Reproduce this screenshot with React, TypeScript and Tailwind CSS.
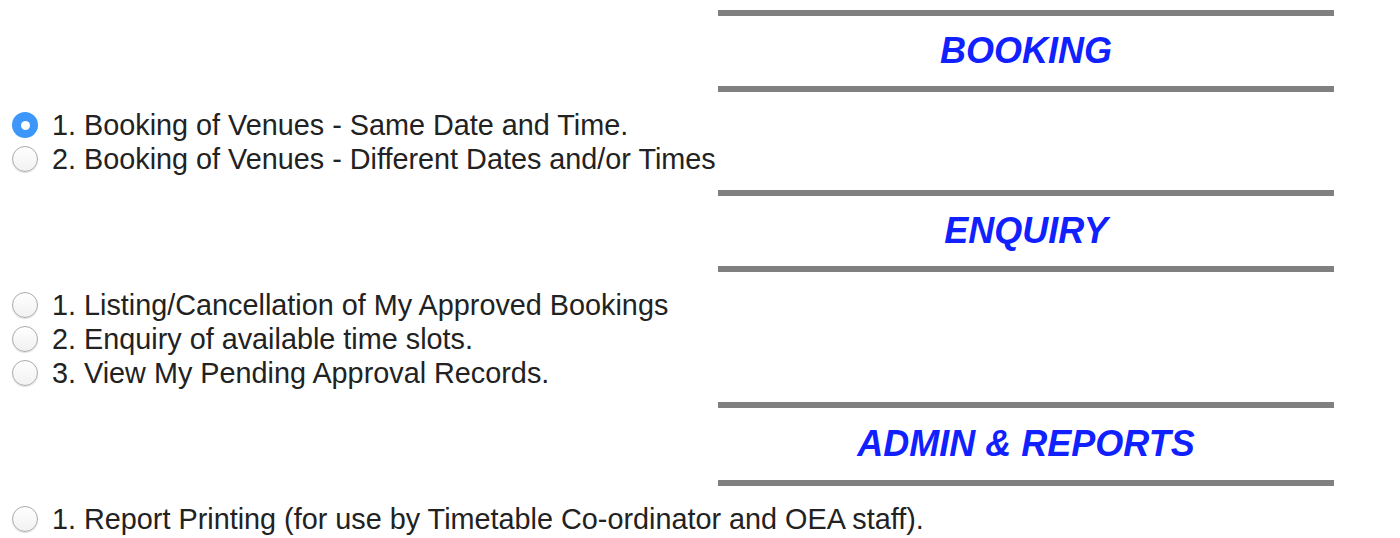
import { useState } from "react";

interface Section {
  title: string;
  items: string[];
  gapTop: string;
  height: string;
}

const sections: Section[] = [
  {
    title: "BOOKING",
    gapTop: "mt-[10px]",
    height: "h-[82px]",
    items: [
      "1. Booking of Venues - Same Date and Time.",
      "2. Booking of Venues - Different Dates and/or Times",
    ],
  },
  {
    title: "ENQUIRY",
    gapTop: "mt-[14px]",
    height: "h-[82px]",
    items: [
      "1. Listing/Cancellation of My Approved Bookings",
      "2. Enquiry of available time slots.",
      "3. View My Pending Approval Records.",
    ],
  },
  {
    title: "ADMIN & REPORTS",
    gapTop: "mt-[12px]",
    height: "h-[84px]",
    items: ["1. Report Printing (for use by Timetable Co-ordinator and OEA staff)."],
  },
];

function Radio({ checked }: { checked: boolean }) {
  if (checked) {
    return (
      <span className="flex h-[26px] w-[26px] shrink-0 items-center justify-center rounded-full bg-[#3d97fb]">
        <span className="h-[9px] w-[9px] rounded-full bg-white" />
      </span>
    );
  }
  return (
    <span className="h-[26px] w-[26px] shrink-0 rounded-full border border-[#ababab] bg-gradient-to-b from-white to-[#f1f1f1] shadow-[0_1px_1px_rgba(0,0,0,0.12)]" />
  );
}

export default function App() {
  const [selected, setSelected] = useState("BOOKING-0");

  return (
    <div
      className="min-h-screen bg-white text-[#222222]"
      style={{ fontFamily: '"Liberation Sans", Arial, Helvetica, sans-serif' }}
    >
      <div className="flex flex-col">
        {sections.map((section) => (
          <div key={section.title} className={`flex flex-col ${section.gapTop}`}>
            {/* Section header */}
            <div
              className={`ml-[718px] flex w-[616px] items-center justify-center border-y-[6px] border-[#808080] ${section.height}`}
            >
              <span className="text-[36px] font-bold italic leading-none text-[#1020ff]">
                {section.title}
              </span>
            </div>

            {/* Options */}
            <div className="mt-[16px] flex flex-col">
              {section.items.map((item, i) => {
                const key = `${section.title}-${i}`;
                return (
                  <label
                    key={key}
                    className="flex h-[34px] cursor-pointer items-center gap-[14px] pl-[12px]"
                    onClick={() => setSelected(key)}
                  >
                    <Radio checked={selected === key} />
                    <span className="whitespace-nowrap text-[28.8px] leading-[34px]">{item}</span>
                  </label>
                );
              })}
            </div>
          </div>
        ))}
      </div>
    </div>
  );
}
